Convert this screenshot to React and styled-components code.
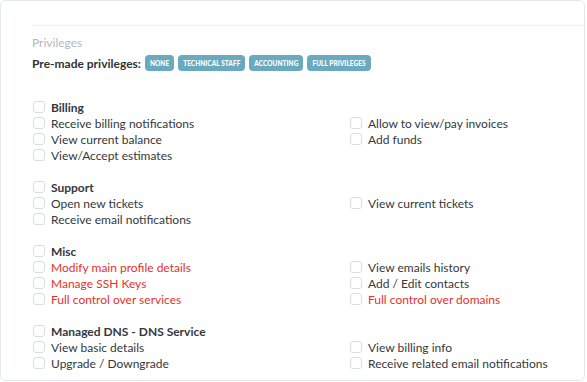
import React from "react";
import styled, { createGlobalStyle } from "styled-components";

const Global = createGlobalStyle`
  html, body { margin: 0; padding: 0; background: #ffffff; }
  body { font-family: Lato, "Open Sans", sans-serif; -webkit-font-smoothing: antialiased; }
`;

const Card = styled.div`
  box-sizing: border-box;
  width: 585px;
  height: 381px;
  border: 1px solid #e4e8ec;
  border-radius: 6px;
  padding: 24px 0 0 31px;
  overflow: hidden;
`;

const Section = styled.div`
  border-top: 1px solid #eef0f3;
  padding-top: 9px;
`;

const Caption = styled.div`
  font-size: 12px;
  line-height: 16px;
  color: #b3b8bf;
  margin-bottom: 4px;
`;

const PresetRow = styled.div`
  display: flex;
  align-items: center;
  gap: 4px;
  height: 16px;
`;

const PresetLabel = styled.span`
  font-size: 12px;
  font-weight: 700;
  color: #2e3338;
  margin-right: 0px;
`;

const Badge = styled.span`
  display: inline-flex;
  align-items: center;
  height: 16px;
  padding: 0 5px;
  border-radius: 4px;
  background: #6aaabe;
  color: #ffffff;
  font-size: 6.5px;
  font-weight: 900;
  letter-spacing: 0.05px;
  text-transform: uppercase;
`;

const Groups = styled.div`
  margin-top: 28px;
  display: flex;
  flex-direction: column;
  gap: 16px;
`;

const Group = styled.div`
  display: grid;
  grid-template-columns: 317px 1fr;
  grid-auto-rows: 16px;
`;

const Item = styled.label`
  display: flex;
  align-items: center;
  height: 16px;
  padding-left: 1px;
  font-size: 12px;
  font-weight: ${(p) => (p.$title ? 700 : 400)};
  color: ${(p) => (p.$danger ? "#e8302c" : "#33383d")};
  white-space: nowrap;
`;

const Box = styled.span`
  box-sizing: border-box;
  width: 12px;
  height: 12px;
  border: 1px solid #dadee2;
  border-radius: 3px;
  background: #fff;
  margin-right: 6px;
  flex: none;
`;

const groups = [
  {
    title: "Billing",
    left: [
      ["Receive billing notifications"],
      ["View current balance"],
      ["View/Accept estimates"],
    ],
    right: [["Allow to view/pay invoices"], ["Add funds"]],
  },
  {
    title: "Support",
    left: [["Open new tickets"], ["Receive email notifications"]],
    right: [["View current tickets"]],
  },
  {
    title: "Misc",
    left: [
      ["Modify main profile details", true],
      ["Manage SSH Keys", true],
      ["Full control over services", true],
    ],
    right: [
      ["View emails history"],
      ["Add / Edit contacts"],
      ["Full control over domains", true],
    ],
  },
  {
    title: "Managed DNS - DNS Service",
    left: [["View basic details"], ["Upgrade / Downgrade"]],
    right: [["View billing info"], ["Receive related email notifications"]],
  },
];

function Check({ label, danger, title }) {
  return (
    <Item $danger={danger} $title={title}>
      <Box />
      {label}
    </Item>
  );
}

export default function App() {
  return (
    <>
      <Global />
      <Card>
        <Section>
          <Caption>Privileges</Caption>
          <PresetRow>
            <PresetLabel>Pre-made privileges:</PresetLabel>
            <Badge>None</Badge>
            <Badge>Technical staff</Badge>
            <Badge>Accounting</Badge>
            <Badge>Full privileges</Badge>
          </PresetRow>
          <Groups>
            {groups.map((g) => {
              const rows = Math.max(g.left.length, g.right.length);
              const cells = [<Check key="t" label={g.title} title />, <span key="te" />];
              for (let i = 0; i < rows; i++) {
                const l = g.left[i];
                const r = g.right[i];
                cells.push(l ? <Check key={"l" + i} label={l[0]} danger={l[1]} /> : <span key={"l" + i} />);
                cells.push(r ? <Check key={"r" + i} label={r[0]} danger={r[1]} /> : <span key={"r" + i} />);
              }
              return <Group key={g.title}>{cells}</Group>;
            })}
          </Groups>
        </Section>
      </Card>
    </>
  );
}
